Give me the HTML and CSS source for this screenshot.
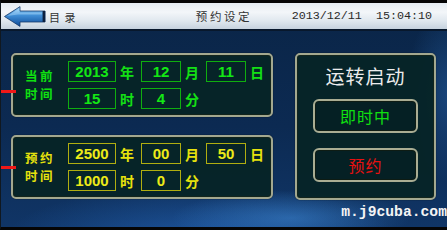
FILE: index.html
```html
<!DOCTYPE html>
<html lang="zh">
<head>
<meta charset="utf-8">
<title>预约设定</title>
<link rel="stylesheet" href="styles.css">
</head>
<body>
<div class="screen">
  <header class="header">
    <div class="back">
      <svg class="arrow" width="42" height="21" viewBox="0 0 42 21">
        <defs>
          <linearGradient id="ag" x1="0" y1="0" x2="0" y2="1">
            <stop offset="0" stop-color="#a8d8f8"/>
            <stop offset="0.35" stop-color="#4a9ae0"/>
            <stop offset="1" stop-color="#0c4a98"/>
          </linearGradient>
        </defs>
        <path d="M0.5 10.5 L16 0.6 L16 5 L41 5 L41 16 L16 16 L16 20.4 Z" fill="url(#ag)" stroke="#163a6a" stroke-width="0.8"/>
        <rect x="38.6" y="5" width="2.6" height="11" fill="#0c2040"/>
        <path d="M3 10 L15.5 2.5 L15.5 6.5 L38 6.5 L38 8.5 L14 8.5 Z" fill="#d8f0ff" opacity="0.35"/>
      </svg>
      <span class="back-label">目 录</span>
    </div>
    <div class="title">预约设定</div>
    <div class="clock">2013/12/11  15:04:10</div>
  </header>

  <main class="main">
    <div class="left-col">
      <section class="panel panel-now">
        <div class="label label-green"><span>当前</span><span>时间</span></div>
        <div class="fields fields-green">
          <div class="box">2013</div><div class="unit">年</div>
          <div class="box">12</div><div class="unit">月</div>
          <div class="box">11</div><div class="unit">日</div>
          <div class="box">15</div><div class="unit">时</div>
          <div class="box">4</div><div class="unit">分</div>
        </div>
      </section>
      <section class="panel panel-plan">
        <div class="label label-yellow"><span>预约</span><span>时间</span></div>
        <div class="fields fields-yellow">
          <div class="box">2500</div><div class="unit">年</div>
          <div class="box">00</div><div class="unit">月</div>
          <div class="box">50</div><div class="unit">日</div>
          <div class="box">1000</div><div class="unit">时</div>
          <div class="box">0</div><div class="unit">分</div>
        </div>
      </section>
    </div>

    <section class="panel run-panel">
      <div class="run-title">运转启动</div>
      <div class="btn btn-now">即时中</div>
      <div class="btn btn-plan">预约</div>
    </section>
  </main>

  <div class="watermark">m.j9cuba.com</div>
</div>
</body>
</html>
```

FILE: styles.css
```css
html, body {
  margin: 0;
  padding: 0;
  background: #000;
}

.screen {
  position: relative;
  width: 447px;
  height: 230px;
  box-sizing: border-box;
  border-top: 3px solid #050505;
  border-bottom: 3px solid #050505;
  border-left: 1px solid #101820;
  display: flex;
  flex-direction: column;
  overflow: hidden;
  background:
    radial-gradient(ellipse 170px 40px at 290px 215px, rgba(70, 150, 230, 0.45), rgba(70, 150, 230, 0) 70%),
    radial-gradient(ellipse 260px 70px at 200px 235px, rgba(40, 110, 200, 0.55), rgba(40, 110, 200, 0) 75%),
    radial-gradient(ellipse 60px 120px at 450px 90px, rgba(40, 100, 170, 0.5), rgba(40, 100, 170, 0) 75%),
    linear-gradient(180deg, #0a2547 0%, #0c2a52 55%, #103566 100%);
  font-family: "Noto Sans CJK SC", "Noto Sans", sans-serif;
}

/* ---------- header ---------- */
.header {
  height: 26px;
  flex: none;
  display: grid;
  grid-template-columns: 1fr auto 1fr;
  align-items: center;
  border-bottom: 2px solid #08182c;
  background: linear-gradient(180deg, #e4ebf2 0%, #f3f6f9 35%, #dfe7ee 70%, #c6d2de 100%);
  color: #2c2c2c;
}

.back {
  display: flex;
  align-items: center;
  padding-left: 3px;
  padding-top: 1px;
}

.arrow {
  display: block;
}

.back-label {
  margin-left: 3px;
  font-size: 11px;
  letter-spacing: 1px;
  color: #333;
}

.title {
  font-size: 11.5px;
  letter-spacing: 2.6px;
  color: #333;
}

.clock {
  justify-self: end;
  padding-right: 15px;
  font-family: "Liberation Mono", "DejaVu Sans Mono", monospace;
  font-size: 11.7px;
  white-space: pre;
  color: #2a2a2a;
}

/* ---------- main ---------- */
.main {
  flex: 1;
  display: flex;
  align-items: flex-start;
  padding: 22px 0 0 10px;
  gap: 22px;
}

.left-col {
  width: 262px;
  display: flex;
  flex-direction: column;
  gap: 18px;
}

.panel {
  position: relative;
  box-sizing: border-box;
  border: 2px solid #a3a88f;
  border-radius: 5px;
  background: rgba(6, 36, 38, 0.95);
  box-shadow: inset 0 0 0 1px #13251c, 0 0 1px #000;
}

.panel-now,
.panel-plan {
  display: flex;
  align-items: center;
  padding: 6px 0 6px 12px;
}

.panel-now::before,
.panel-plan::before {
  content: "";
  position: absolute;
  left: -12px;
  width: 15px;
  height: 3px;
  background: #f01818;
}

.panel-now::before {
  top: 35px;
}

.panel-plan::before {
  top: 29px;
}

.label {
  width: 30px;
  display: flex;
  flex-direction: column;
  font-size: 12.5px;
  line-height: 18px;
  font-weight: 700;
  letter-spacing: 2.5px;
  margin-right: 13px;
}

.label-green { color: #10e010; }
.label-yellow { color: #e6e20c; }

.fields {
  display: grid;
  grid-template-columns: 48px 25px 40px 25px 40px 25px;
  grid-auto-rows: 21px;
  row-gap: 6px;
}

.box {
  box-sizing: border-box;
  display: flex;
  align-items: center;
  justify-content: center;
  font-family: "Liberation Sans", Arial, sans-serif;
  font-weight: 700;
  font-size: 15px;
}

.unit {
  display: flex;
  align-items: center;
  padding-left: 4px;
  font-size: 14px;
  font-weight: 700;
}

.fields-green .box {
  border: 1px solid #0fae0f;
  color: #14e814;
}

.fields-green .unit { color: #14e014; }

.fields-yellow .box {
  border: 1px solid #b0ae10;
  color: #ecea18;
}

.fields-yellow .unit { color: #e6e20c; }

/* ---------- run panel ---------- */
.run-panel {
  width: 141px;
  height: 147px;
  display: flex;
  flex-direction: column;
  align-items: center;
  padding-top: 9px;
}

.run-title {
  height: 24px;
  line-height: 24px;
  font-size: 19px;
  color: #ececec;
  letter-spacing: 1px;
  margin-bottom: 11px;
  font-family: "Noto Sans CJK SC", sans-serif;
}

.btn {
  box-sizing: border-box;
  width: 105px;
  height: 34px;
  border: 2px solid #a9ad93;
  border-radius: 6px;
  display: flex;
  align-items: center;
  justify-content: center;
  font-size: 16px;
  letter-spacing: 1px;
  background: #052024;
  box-shadow: inset 0 0 0 1px #0e1c14;
}

.btn + .btn {
  margin-top: 15px;
}

.btn-now { color: #10e010; }
.btn-plan { color: #e81010; }

/* ---------- watermark ---------- */
.watermark {
  position: absolute;
  right: 0;
  bottom: 7px;
  font-family: "Liberation Mono", "DejaVu Sans Mono", monospace;
  font-size: 14.7px;
  font-weight: 700;
  line-height: 15px;
  color: #f4f4f4;
}
```
